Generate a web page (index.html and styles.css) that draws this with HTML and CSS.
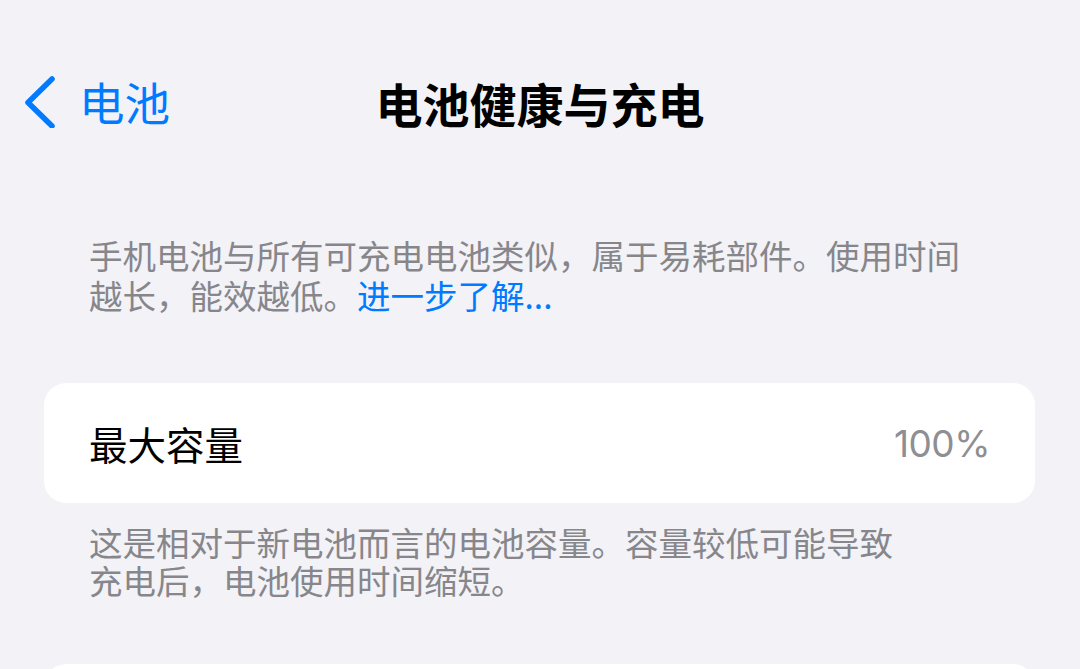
FILE: index.html
```html
<!DOCTYPE html>
<html lang="zh-CN">
<head>
    <meta charset="UTF-8">
    <meta name="viewport" content="width=device-width, initial-scale=1.0">
    <title>电池健康与充电</title>
    <link rel="stylesheet" href="styles.css">
</head>
<body>
    <div class="nav">
        <a class="back" href="#">
            <svg class="chevron" width="32" height="52" viewBox="0 0 32 52">
                <polyline points="28,3 4,26.5 28,50" fill="none" stroke="#007aff" stroke-width="5.5" stroke-linecap="round" stroke-linejoin="round"/>
            </svg>
            <span>电池</span>
        </a>
        <h1 class="title">电池健康与充电</h1>
        <div></div>
    </div>

    <p class="desc">手机电池与所有可充电电池类似，属于易耗部件。使用时间越长，能效越低。<a href="#">进一步了解...</a></p>

    <div class="card">
        <span class="label">最大容量</span>
        <span class="value">100%</span>
    </div>
    <p class="note">这是相对于新电池而言的电池容量。容量较低可能导致充电后，电池使用时间缩短。</p>

    <div class="card card-next"></div>
</body>
</html>
```

FILE: styles.css
```css
body {
    margin: 0;
    background-color: #f2f2f7;
    font-family: "Noto Sans CJK SC", "Noto Sans", sans-serif;
    color: #000;
    overflow: hidden;
}
.nav {
    display: grid;
    grid-template-columns: 1fr auto 1fr;
    align-items: center;
    height: 90px;
    padding-top: 57px;
}
.back {
    display: flex;
    align-items: center;
    color: #007aff;
    text-decoration: none;
    font-size: 45.5px;
    padding-left: 24px;
}
.back span {
    margin-left: 23px;
    line-height: 1;
}
.title {
    margin: 0;
    font-size: 47px;
    font-weight: 700;
    line-height: 1;
}
.desc,
.note {
    margin: 0;
    padding-left: 89px;
    color: #86868b;
    font-size: 33.5px;
}
.desc {
    margin-top: 88px;
    max-width: 891px;
    line-height: 40px;
}
.desc a {
    display: inline-block;
    color: #007aff;
    text-decoration: none;
}
.card {
    display: flex;
    justify-content: space-between;
    align-items: center;
    height: 120px;
    margin: 68px 45px 0 44px;
    padding: 0 45px;
    background-color: #fff;
    border-radius: 22px;
}
.label {
    font-size: 38.5px;
}
.value {
    font-family: Inter, "Noto Sans", sans-serif;
    font-size: 37px;
    letter-spacing: -0.5px;
    color: #8e8e93;
}
.note {
    margin-top: 20px;
    max-width: 820px;
    line-height: 38px;
}
.card-next {
    margin-top: 65px;
}
```
